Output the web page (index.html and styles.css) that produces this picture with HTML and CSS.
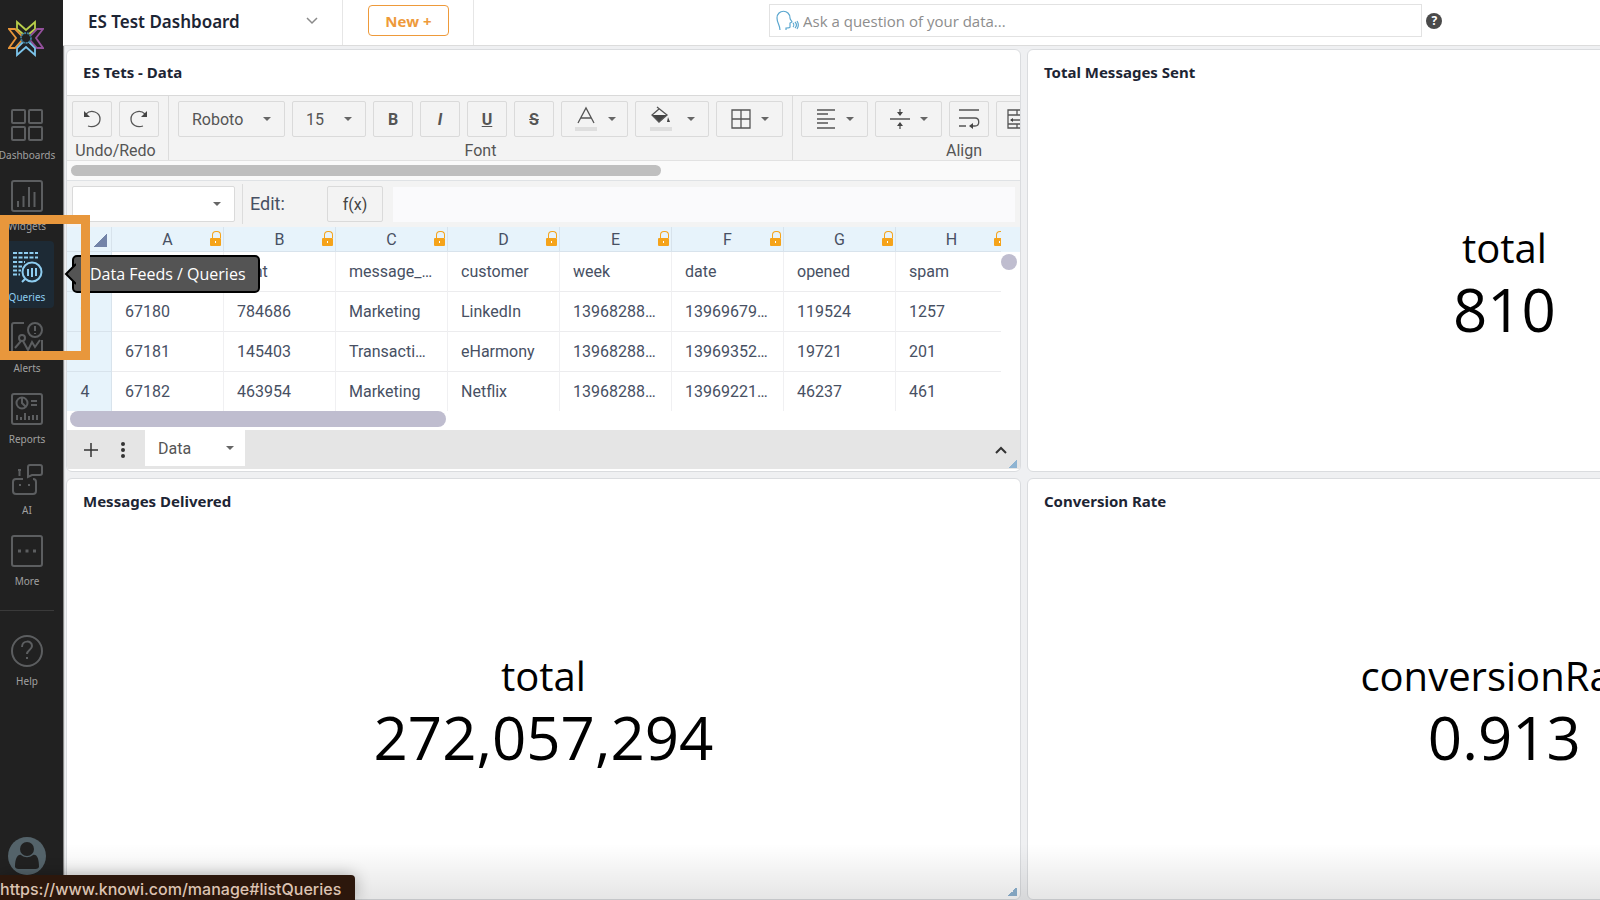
FILE: index.html
```html
<!DOCTYPE html>
<html lang="en">
<head>
  <meta charset="UTF-8">
  <title>ES Test Dashboard</title>
  <meta name="viewport" content="width=device-width, initial-scale=1.0">
  <link rel="stylesheet" href="styles.css">
</head>
<body>

  <!-- Sidebar -->
  <nav class="sidebar">
    <a class="logo" href="#" aria-label="Home">
      <svg width="36" height="38" viewBox="0 0 36 38" fill="none" stroke-width="1.8">
        <path d="M9 3l9 8 9-8v7l-6 5h-6l-6-5z" stroke="#b9cf4a"/>
        <path d="M1 10h6l7 7v4l-7 8H1l7-10z" stroke="#e8963a"/>
        <path d="M35 10h-6l-7 7v4l7 8h6l-7-10z" stroke="#93509b"/>
        <path d="M9 36l9-8 9 8v-7l-6-6h-6l-6 6z" stroke="#7cc4ea"/>
        <circle cx="18" cy="19" r="5" fill="#212121" stroke="#3f7e9c" stroke-dasharray="2 1"/>
      </svg>
    </a>
    <a class="nav-item" href="#">
      <svg class="nav-icon" viewBox="0 0 32 32">
        <rect x="1" y="1" width="13" height="13" rx="1"/><rect x="18" y="1" width="13" height="13" rx="1"/>
        <rect x="1" y="18" width="13" height="13" rx="1"/><rect x="18" y="18" width="13" height="13" rx="1"/>
      </svg>
      <span>Dashboards</span>
    </a>
    <a class="nav-item" href="#">
      <svg class="nav-icon" viewBox="0 0 32 32">
        <rect x="1" y="1" width="30" height="30" rx="2"/>
        <path d="M7 27v-6M12.500 27V16M18 27V7M23.500 27V12"/>
      </svg>
      <span>Widgets</span>
    </a>
    <a class="nav-item active" href="#listQueries">
      <svg class="nav-icon" viewBox="0 0 32 32">
        <path d="M2 2h25M2 6.500h25M2 11h12M2 15.500h9M2 19.500h8M2 23.500h7" stroke-dasharray="4 1.500"/>
        <circle cx="21" cy="21" r="9.500"/>
        <path d="M14 28l-3 3M17 25v-7M21 26v-9M25 25v-8"/>
      </svg>
      <span>Queries</span>
    </a>
    <a class="nav-item" href="#">
      <svg class="nav-icon" viewBox="0 0 32 32">
        <path d="M13 1H3a2 2 0 0 0-2 2v28h30V18"/>
        <circle cx="24" cy="8" r="7"/><path d="M24 4v5M24 11v1"/>
        <circle cx="11" cy="16" r="3"/><path d="M4 26l6-7M12 19l5 9 4-8 3 5 5-7"/>
      </svg>
      <span>Alerts</span>
    </a>
    <a class="nav-item" href="#">
      <svg class="nav-icon" viewBox="0 0 32 32">
        <rect x="1" y="1" width="30" height="30" rx="2"/>
        <circle cx="11" cy="10" r="5.500"/><path d="M11 5v5l4 4M20 8h6M20 12h6"/>
        <path d="M6 27v-5M10 27v-3M14 27v-7M18 27v-4M22 27v-5M26 27v-5"/>
      </svg>
      <span>Reports</span>
    </a>
    <a class="nav-item" href="#">
      <svg class="nav-icon" viewBox="0 0 32 32">
        <path d="M12 15H5a3 3 0 0 0-3 3v9a3 3 0 0 0 3 3h17a3 3 0 0 0 3-3v-9a3 3 0 0 0-3-3"/>
        <path d="M8.500 12V6M7 6h3M9 20v2M18 20v2"/>
        <path d="M17 13V3a2 2 0 0 1 2-2h10a2 2 0 0 1 2 2v6a2 2 0 0 1-2 2h-8z"/>
      </svg>
      <span>AI</span>
    </a>
    <a class="nav-item" href="#">
      <svg class="nav-icon" viewBox="0 0 32 32">
        <rect x="1" y="1" width="30" height="30" rx="2"/>
        <path d="M7 16h3M14.500 16h3M22 16h3" stroke-width="3"/>
      </svg>
      <span>More</span>
    </a>
    <hr class="nav-divider">
    <a class="nav-item" href="#">
      <svg class="nav-icon" viewBox="0 0 32 32">
        <circle cx="16" cy="16" r="15"/>
        <path d="M11 12c0-7 10-7 10-1 0 4-5 4-5 8M16 22v2"/>
      </svg>
      <span>Help</span>
    </a>
    <a class="avatar" href="#" aria-label="Account">
      <svg width="38" height="38" viewBox="0 0 38 38">
        <circle cx="19" cy="19" r="19" fill="#54636a"/>
        <circle cx="19" cy="12" r="7" fill="#212121"/>
        <path d="M7 30c0-9 3-13 6-12 4 3 8 3 12 0 4-1 6 4 6 12-1 2-3 2-5 2H12c-2 0-4 0-5-2z" fill="#212121"/>
      </svg>
    </a>
  </nav>

  <main class="main">
    <!-- Top bar -->
    <header class="topbar">
      <button class="dash-title">ES Test Dashboard
        <svg width="12" height="8" viewBox="0 0 12 8"><path d="M1 1l5 5 5-5" fill="none" stroke="#8a8a8a" stroke-width="1.500"/></svg>
      </button>
      <div class="new-wrap"><button class="new-btn">New +</button></div>
      <label class="search">
        <svg width="24" height="22" viewBox="0 0 24 22" fill="none" stroke="#5ba7cf" stroke-width="1.200">
          <path d="M4 20c0-5-3-7-3-12 0-9 13-9 13 0 0 2 2 3 2 4l-2 1v4c0 1-3 1-4 1v2"/>
          <path d="M17 13c1 1 1 3 0 4M19 12c2 2 2 4 0 6M21 11c2 3 2 5 0 8"/>
        </svg>
        <input type="text" placeholder="Ask a question of your data..." aria-label="Ask a question of your data">
      </label>
      <button class="help-btn" aria-label="Search help">?</button>
    </header>

    <!-- Widgets -->
    <div class="board">
      <section class="card">
        <h2>ES Tets - Data</h2>

        <div class="toolbar">
          <div class="tool-group">
            <div class="tools">
              <button class="tool" aria-label="Undo"><svg width="20" height="20" viewBox="0 0 20 20"><path d="M4 5c5-5 14-2 14 5 0 6-6 9-12 7"/><path d="M2 2v6h6z" class="solid"/></svg></button>
              <button class="tool" aria-label="Redo"><svg width="20" height="20" viewBox="0 0 20 20"><path d="M16 5C11 0 2 3 2 10c0 6 6 9 12 7"/><path d="M18 2v6h-6z" class="solid"/></svg></button>
            </div>
            <span class="group-label">Undo/Redo</span>
          </div>
          <div class="tool-group">
            <div class="tools">
              <div class="picker font-picker"><select aria-label="Font family"><option>Roboto</option></select></div>
              <div class="picker size-picker"><select aria-label="Font size"><option>15</option></select></div>
              <button class="tool"><b>B</b></button>
              <button class="tool"><i>I</i></button>
              <button class="tool"><u>U</u></button>
              <button class="tool"><s>S</s></button>
              <button class="tool wide caret" aria-label="Text color"><svg width="24" height="26" viewBox="0 0 24 26"><path d="M4 17l8-15 8 15M7 12h10"/><path d="M1 21h22v4H1z" class="swatch"/></svg></button>
              <button class="tool wider caret" aria-label="Fill color"><svg width="24" height="26" viewBox="0 0 24 26"><path d="M3 9h15l-8 7z" class="solid"/><path d="M8 1l10 8-8 7-7-7 7-6"/><path d="M19 11l2 5h-3z" class="solid"/><path d="M1 21h22v4H1z" class="swatch"/></svg></button>
              <button class="tool wide caret" aria-label="Borders"><svg width="20" height="20" viewBox="0 0 20 20"><path d="M1 1h18v18H1zM10 1v18M1 10h18"/></svg></button>
            </div>
            <span class="group-label">Font</span>
          </div>
          <div class="tool-group align-group">
            <div class="tools">
              <button class="tool wide caret" aria-label="Horizontal align"><svg width="20" height="20" viewBox="0 0 20 20"><path d="M1 1h18M1 5h11M1 10h18M1 14h11M1 19h18"/></svg></button>
              <button class="tool wide caret" aria-label="Vertical align"><svg width="20" height="20" viewBox="0 0 20 20"><path d="M0 10h20M10 0v6M10 20v-6"/><path d="M7 3l3 4 3-4zM7 17l3-4 3 4z" class="solid"/></svg></button>
              <button class="tool" aria-label="Wrap text"><svg width="22" height="20" viewBox="0 0 22 20"><path d="M1 1h20M1 9h16c5 0 5 8 0 8h-4M1 17h7"/><path d="M15 14v6l-4-3z" class="solid"/></svg></button>
              <button class="tool merge caret" aria-label="Merge cells"><svg width="20" height="20" viewBox="0 0 20 20"><path d="M1 1h18v18H1zM1 6h18M1 15h18M10 1v5M10 15v4M4 11h12"/><path d="M3 11l3-2v4zM17 11l-3-2v4z" class="solid"/></svg></button>
            </div>
            <span class="group-label">Align</span>
          </div>
        </div>
        <div class="toolbar-scroll"><div class="thumb"></div></div>

        <div class="formula-bar">
          <div class="picker cell-picker"><select aria-label="Cell"><option></option></select></div>
          <label class="edit-label" for="formula">Edit:</label>
          <button class="fx">f(x)</button>
          <input id="formula" type="text">
        </div>

        <div class="sheet">
          <div class="sheet-view">
            <table>
              <thead>
                <tr>
                  <th class="corner"></th>
                  <th>A<i class="lock"></i></th><th>B<i class="lock"></i></th><th>C<i class="lock"></i></th><th>D<i class="lock"></i></th>
                  <th>E<i class="lock"></i></th><th>F<i class="lock"></i></th><th>G<i class="lock"></i></th><th>H<i class="lock"></i></th>
                </tr>
              </thead>
              <tbody>
                <tr><th>1</th><td></td><td>sent</td><td>message_type</td><td>customer</td><td>week</td><td>date</td><td>opened</td><td>spam</td></tr>
                <tr><th>2</th><td>67180</td><td>784686</td><td>Marketing</td><td>LinkedIn</td><td>1396828800000</td><td>1396967900000</td><td>119524</td><td>1257</td></tr>
                <tr><th>3</th><td>67181</td><td>145403</td><td>Transactional</td><td>eHarmony</td><td>1396828800000</td><td>1396935200000</td><td>19721</td><td>201</td></tr>
                <tr><th>4</th><td>67182</td><td>463954</td><td>Marketing</td><td>Netflix</td><td>1396828800000</td><td>1396922100000</td><td>46237</td><td>461</td></tr>
              </tbody>
            </table>
          </div>
          <div class="sheet-side"><div class="dot"></div></div>
        </div>
        <div class="sheet-scroll"><div class="thumb"></div></div>

        <div class="sheet-tabs">
          <button aria-label="Add sheet"><svg width="14" height="14" viewBox="0 0 14 14"><path d="M7 0v14M0 7h14" stroke="#333" stroke-width="1.500"/></svg></button>
          <button aria-label="Sheet menu"><svg width="4" height="16" viewBox="0 0 4 16" fill="#333"><circle cx="2" cy="2" r="2"/><circle cx="2" cy="8" r="2"/><circle cx="2" cy="14" r="2"/></svg></button>
          <button class="sheet-tab caret">Data</button>
          <button class="collapse" aria-label="Collapse"><svg width="12" height="8" viewBox="0 0 12 8"><path d="M1 7l5-5 5 5" fill="none" stroke="#333" stroke-width="2"/></svg></button>
        </div>
        <span class="resize"></span>
      </section>

      <section class="card">
        <h2>Total Messages Sent</h2>
        <div class="metric">
          <div class="metric-label">total</div>
          <div class="metric-value">810</div>
        </div>
      </section>

      <section class="card">
        <h2>Messages Delivered</h2>
        <div class="metric">
          <div class="metric-label">total</div>
          <div class="metric-value">272,057,294</div>
        </div>
        <span class="resize"></span>
      </section>

      <section class="card">
        <h2>Conversion Rate</h2>
        <div class="metric">
          <div class="metric-label">conversionRate</div>
          <div class="metric-value">0.913</div>
        </div>
      </section>
    </div>
  </main>

  <!-- Overlays -->
  <div class="tooltip" role="tooltip">
    <svg class="tooltip-arrow" width="12" height="22" viewBox="0 0 12 22"><path d="M12 1L2 11l10 10" fill="#545454" stroke="#000" stroke-width="2"/></svg>
    Data Feeds / Queries
  </div>
  <div class="highlight"></div>
  <div class="bottom-fade"></div>
  <div class="status-url">https://www.knowi.com/manage#listQueries</div>

</body>
</html>
```
FILE: styles.css
```css
* {
  box-sizing: border-box;
}

body {
  margin: 0;
  display: flex;
  height: 100vh;
  overflow: hidden;
  font-family: 'Open Sans', 'Noto Sans', sans-serif;
  color: #1d2534;
  background: #eff0f2;
}

button, input, select {
  font: inherit;
  color: inherit;
  border: none;
  background: none;
  padding: 0;
  margin: 0;
}

/* Sidebar */
.sidebar {
  flex: none;
  width: 63px;
  background: #212121;
  display: flex;
  flex-direction: column;
  padding-right: 9px;
  box-shadow: 1px 0 1px #888;
}

.logo {
  height: 99px;
  padding: 19px 0 0 8px;
}

.nav-item {
  flex: none;
  display: flex;
  flex-direction: column;
  align-items: center;
  height: 67px;
  margin-bottom: 4px;
  padding-top: 10px;
  font-family: 'Noto Sans', sans-serif;
  font-size: 10px;
  line-height: 14px;
  color: #a0a0a0;
  text-decoration: none;
}

.nav-icon {
  width: 32px;
  height: 32px;
  margin-bottom: 7px;
  fill: none;
  stroke: #5c5e60;
  stroke-width: 2;
}

.nav-item.active {
  color: #8ecdf0;
  background: #1d2a35;
  border-radius: 4px;
}

.nav-item.active .nav-icon {
  stroke: #8ecdf0;
}

.nav-divider {
  width: 100%;
  border: none;
  border-top: 1px solid #3a3a3a;
  margin: 14px 0;
}

.avatar {
  margin: auto 0 25px 8px;
  height: 38px;
}

/* Top bar */
.main {
  flex: 1;
  min-width: 0;
  display: flex;
  flex-direction: column;
}

.topbar {
  flex: none;
  display: flex;
  align-items: center;
  height: 46px;
  background: #fff;
  border-bottom: 1px solid #dcdcdc;
}

.dash-title {
  display: flex;
  align-items: center;
  justify-content: space-between;
  width: 280px;
  height: 45px;
  padding: 0 24px 3px 25px;
  font-family: 'Noto Sans', sans-serif;
  font-size: 17px;
  font-weight: 600;
  border-right: 1px solid #e6e6e6;
}

.new-wrap {
  width: 131px;
  height: 45px;
  padding: 5px 0 0 25px;
  border-right: 1px solid #e6e6e6;
}

.new-btn {
  width: 81px;
  height: 31px;
  font-size: 15px;
  font-weight: 700;
  color: #ee9a3a;
  border: 1px solid #ee9a3a;
  border-radius: 4px;
}

.search {
  display: flex;
  align-items: center;
  gap: 3px;
  width: 42.5%;
  height: 33px;
  margin: 0 4px 4px 19.2%;
  padding-left: 6px;
  border: 1px solid #e2e2e2;
}

.search input {
  flex: 1;
  font-size: 15px;
  outline: none;
}

.search input::placeholder {
  color: #8d8d8d;
}

.help-btn {
  width: 16px;
  height: 16px;
  margin-bottom: 4px;
  border-radius: 50%;
  background: #4a4a4a;
  color: #fff;
  font-size: 12px;
  font-weight: 700;
  line-height: 16px;
}

/* The second column runs past the window edge */
.board {
  flex: 1;
  min-height: 0;
  display: grid;
  grid-template-columns: 62.25% 62.25%;
  grid-template-rows: 1fr 1fr;
  gap: 6px;
  padding: 3px 0 0 3px;
  overflow: hidden;
}

.card {
  position: relative;
  display: flex;
  flex-direction: column;
  min-width: 0;
  min-height: 0;
  background: #fff;
  border: 1px solid #dadcdf;
  border-radius: 6px;
  overflow: hidden;
}

.card h2 {
  flex: none;
  margin: 0;
  padding: 0 16px;
  font-family: 'Noto Sans', sans-serif;
  font-size: 15px;
  line-height: 45px;
  font-weight: 700;
}

.resize {
  position: absolute;
  right: 3px;
  bottom: 3px;
  width: 9px;
  height: 9px;
  background: linear-gradient(135deg, transparent 50%, #8fb4d2 50%);
}

.metric {
  flex: 1;
  display: flex;
  flex-direction: column;
  align-items: center;
  justify-content: center;
  padding-top: 10px;
  color: #000;
}

.metric-label {
  font-size: 40px;
  line-height: 42px;
}

.metric-value {
  font-size: 60px;
  line-height: 80px;
}

/* Spreadsheet */
.toolbar {
  flex: none;
  display: flex;
  height: 66px;
  background: #f3f3f3;
  border-top: 1px solid #d9d9d9;
  border-bottom: 1px solid #e2e2e2;
  font-family: Roboto, sans-serif;
  font-size: 16px;
  color: #555;
  overflow: hidden;
}

.tool-group {
  flex: none;
  display: flex;
  flex-direction: column;
  align-items: center;
  padding: 5px 9px 0;
  border-right: 1px solid #dcdcdc;
}

.tool-group:first-child {
  padding-left: 5px;
}

.align-group {
  width: 344px;
  align-items: flex-start;
  padding-left: 8px;
}

.align-group .group-label {
  align-self: center;
}

.tools {
  display: flex;
  gap: 7px;
}

.group-label {
  line-height: 28px;
}

.tool, .picker, .fx {
  flex: none;
  display: flex;
  align-items: center;
  justify-content: center;
  width: 40px;
  height: 36px;
  border: 1px solid #dadada;
  border-radius: 2px;
}

.tool svg {
  fill: none;
  stroke: #555;
  stroke-width: 1.3;
}

.tool svg .solid {
  fill: #444;
  stroke: none;
}

.tool svg .swatch {
  fill: #dedede;
  stroke: none;
}

.tool b, .tool i, .tool u, .tool s {
  font-weight: 700;
}

.tool.wide {
  width: 67px;
  gap: 10px;
}

.tool.wider {
  width: 74px;
  gap: 14px;
}

.tool.merge {
  width: 60px;
  gap: 10px;
}

.caret::after, .picker::after {
  content: "";
  border: 4px solid transparent;
  border-top: 4px solid #666;
  border-bottom: 0;
}

.picker {
  padding: 0 13px;
}

.picker select {
  flex: 1;
  min-width: 0;
  appearance: none;
}

.font-picker {
  width: 107px;
}

.size-picker {
  width: 74px;
}

.toolbar-scroll {
  flex: none;
  height: 19px;
  padding: 4px;
  background: #fafafa;
}

.toolbar-scroll .thumb {
  width: 62.4%;
  height: 11px;
  border-radius: 6px;
  background: #bfbfbf;
}

.formula-bar {
  flex: none;
  display: flex;
  align-items: center;
  height: 47px;
  padding: 0 5px;
  background: #f3f3f3;
  border-top: 1px solid #dfe2e5;
  font-family: Roboto, sans-serif;
  color: #475063;
}

.cell-picker {
  width: 163px;
  background: #fff;
}

.edit-label {
  width: 85px;
  margin-left: 7px;
  padding-left: 7px;
  border-left: 1px solid #dcdcdc;
  font-size: 18px;
  line-height: 40px;
}

.fx {
  width: 56px;
  font-size: 16px;
  color: #444;
}

.formula-bar input {
  flex: 1;
  height: 35px;
  margin-left: 10px;
  background: #fafafc;
}

.sheet {
  flex: none;
  display: flex;
}

.sheet-view {
  flex: 1;
  min-width: 0;
  overflow: hidden;
}

.sheet-side {
  width: 19px;
  border-top: 25px solid #e7f3fb;
}

.dot {
  width: 16px;
  height: 16px;
  margin-top: 2px;
  border-radius: 50%;
  background: #bfbdcf;
}

table {
  table-layout: fixed;
  width: 941px;
  border-collapse: separate;
  border-spacing: 0;
  font-family: Roboto, sans-serif;
  font-size: 16px;
  color: #475063;
}

th, td {
  height: 40px;
  padding: 0 13px;
  border-right: 1px solid #f0f0f2;
  border-bottom: 1px solid #ececee;
  font-weight: 400;
  text-align: left;
  white-space: nowrap;
  overflow: hidden;
  text-overflow: ellipsis;
}

th {
  position: relative;
  padding: 0;
  background: #e7f3fb;
  border-color: #d8e3ec;
  text-align: center;
}

tbody th {
  padding-right: 8px;
}

tbody tr:last-child th, tbody tr:last-child td {
  height: 39px;
  border-bottom: none;
}

thead th {
  width: 112px;
  height: 25px;
}

thead .corner {
  width: 45px;
  background: linear-gradient(135deg, transparent 50%, #7383a8 50%) right 4px bottom 4px / 13px 13px no-repeat #e7f3fb;
}

.lock {
  position: absolute;
  right: 2px;
  bottom: 5px;
  width: 11px;
  height: 8px;
  border-radius: 1px;
  background: radial-gradient(circle, #fff 1px, #f5a31a 1px);
}

.lock::before {
  content: "";
  position: absolute;
  left: 2px;
  bottom: 8px;
  width: 7px;
  height: 6px;
  border: 1px solid #f5a31a;
  border-bottom: none;
  border-radius: 4px 4px 0 0;
}

.sheet-scroll {
  flex: none;
  height: 19px;
  padding-left: 3px;
}

.sheet-scroll .thumb {
  width: 376px;
  height: 16px;
  border-radius: 8px;
  background: #bfbdcf;
}

.sheet-tabs {
  flex: none;
  display: flex;
  align-items: center;
  height: 40px;
  padding-left: 17px;
  gap: 23px;
  background: #e5e5e5;
  border-bottom: 1px solid #fff;
  font-family: Roboto, sans-serif;
  color: #555;
}

.sheet-tabs button {
  display: flex;
  align-items: center;
}

.sheet-tabs .sheet-tab {
  justify-content: space-between;
  align-self: flex-start;
  width: 100px;
  height: 36px;
  margin-left: -3px;
  padding: 0 11px 0 13px;
  background: #fff;
  font-size: 16px;
}

.sheet-tabs .collapse {
  margin: 0 13px 0 auto;
}

/* Overlays */
.tooltip {
  position: absolute;
  left: 72px;
  top: 255px;
  padding: 0 12px 0 16px;
  font-size: 16px;
  line-height: 34px;
  color: #fff;
  background: #545454;
  border: 2px solid #000;
  border-radius: 5px;
}

.tooltip-arrow {
  position: absolute;
  left: -10px;
  top: 6px;
}

.highlight {
  position: absolute;
  left: 0;
  top: 215px;
  width: 90px;
  height: 145px;
  border: 9px solid #e8973c;
}

.bottom-fade {
  position: absolute;
  left: 63px;
  right: 0;
  bottom: 0;
  height: 56px;
  background: linear-gradient(transparent, rgba(0, 0, 0, 0.1));
}

.status-url {
  position: absolute;
  left: 0;
  bottom: 0;
  padding: 4px 14px 0 0;
  font-family: Inter, sans-serif;
  font-size: 16px;
  font-weight: 500;
  line-height: 21px;
  color: #dcc3b2;
  background: #2c170c;
  border-top-right-radius: 4px;
  box-shadow: 0 0 16px rgba(0, 0, 0, 0.3);
}
```
